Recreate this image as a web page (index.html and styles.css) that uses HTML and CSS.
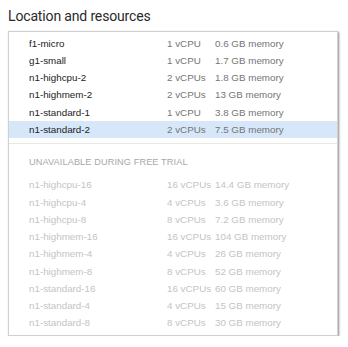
FILE: index.html
```html
<!DOCTYPE html>
<html>
<head>
<meta charset="utf-8">
<link rel="stylesheet" href="styles.css">
</head>
<body>
<div class="page">
  <h1 class="title">Location and resources</h1>
  <div class="card">
    <div class="list">
      <div class="row"><span class="name">f1-micro</span><span class="cpu">1 vCPU</span><span class="mem">0.6 GB memory</span></div>
      <div class="row"><span class="name">g1-small</span><span class="cpu">1 vCPU</span><span class="mem">1.7 GB memory</span></div>
      <div class="row"><span class="name">n1-highcpu-2</span><span class="cpu">2 vCPUs</span><span class="mem">1.8 GB memory</span></div>
      <div class="row"><span class="name">n1-highmem-2</span><span class="cpu">2 vCPUs</span><span class="mem">13 GB memory</span></div>
      <div class="row"><span class="name">n1-standard-1</span><span class="cpu">1 vCPU</span><span class="mem">3.8 GB memory</span></div>
      <div class="row selected"><span class="name">n1-standard-2</span><span class="cpu">2 vCPUs</span><span class="mem">7.5 GB memory</span></div>
    </div>
    <div class="section disabled">
      <div class="section-title">UNAVAILABLE DURING FREE TRIAL</div>
      <div class="row"><span class="name">n1-highcpu-16</span><span class="cpu">16 vCPUs</span><span class="mem">14.4 GB memory</span></div>
      <div class="row"><span class="name">n1-highcpu-4</span><span class="cpu">4 vCPUs</span><span class="mem">3.6 GB memory</span></div>
      <div class="row"><span class="name">n1-highcpu-8</span><span class="cpu">8 vCPUs</span><span class="mem">7.2 GB memory</span></div>
      <div class="row"><span class="name">n1-highmem-16</span><span class="cpu">16 vCPUs</span><span class="mem">104 GB memory</span></div>
      <div class="row"><span class="name">n1-highmem-4</span><span class="cpu">4 vCPUs</span><span class="mem">26 GB memory</span></div>
      <div class="row"><span class="name">n1-highmem-8</span><span class="cpu">8 vCPUs</span><span class="mem">52 GB memory</span></div>
      <div class="row"><span class="name">n1-standard-16</span><span class="cpu">16 vCPUs</span><span class="mem">60 GB memory</span></div>
      <div class="row"><span class="name">n1-standard-4</span><span class="cpu">4 vCPUs</span><span class="mem">15 GB memory</span></div>
      <div class="row"><span class="name">n1-standard-8</span><span class="cpu">8 vCPUs</span><span class="mem">30 GB memory</span></div>
    </div>
  </div>
</div>
</body>
</html>
```
FILE: styles.css
```css
* { box-sizing: border-box; }
html, body { margin: 0; padding: 0; background: #fff; }
.page {
  padding: 6px 10px 0 8px;
  font-family: "Liberation Sans", Arial, sans-serif;
}
.title {
  margin: 0;
  height: 25px;
  font-family: Roboto, "Liberation Sans", sans-serif;
  font-weight: 400;
  font-size: 14px;
  letter-spacing: -0.15px;
  line-height: 21px;
  color: #2a2a2a;
}
.card {
  width: 330px;
  border: 1px solid #d0d0d0;
  box-shadow: 1px 1px 2px rgba(0,0,0,0.45);
  padding: 2.4px 0 3.5px;
  background: #fff;
}
.list {
  padding-bottom: 5px;
  border-bottom: 1px solid #e8e8e8;
}
.row {
  display: grid;
  grid-template-columns: 138px 48px 1fr;
  height: 17.25px;
  align-items: center;
  padding-left: 20px;
  font-size: 9.8px;
  color: #757575;
}
.row .name { color: #222; }
.row.selected { background: #d5e7f8; }
.section-title {
  padding: 10.5px 0 0 20px;
  height: 32.4px;
  font-size: 9.2px;
  color: #a8a8a8;
  letter-spacing: 0.1px;
  line-height: 16px;
}
.disabled .row, .disabled .row .name { color: #c4c4c4; }
```
